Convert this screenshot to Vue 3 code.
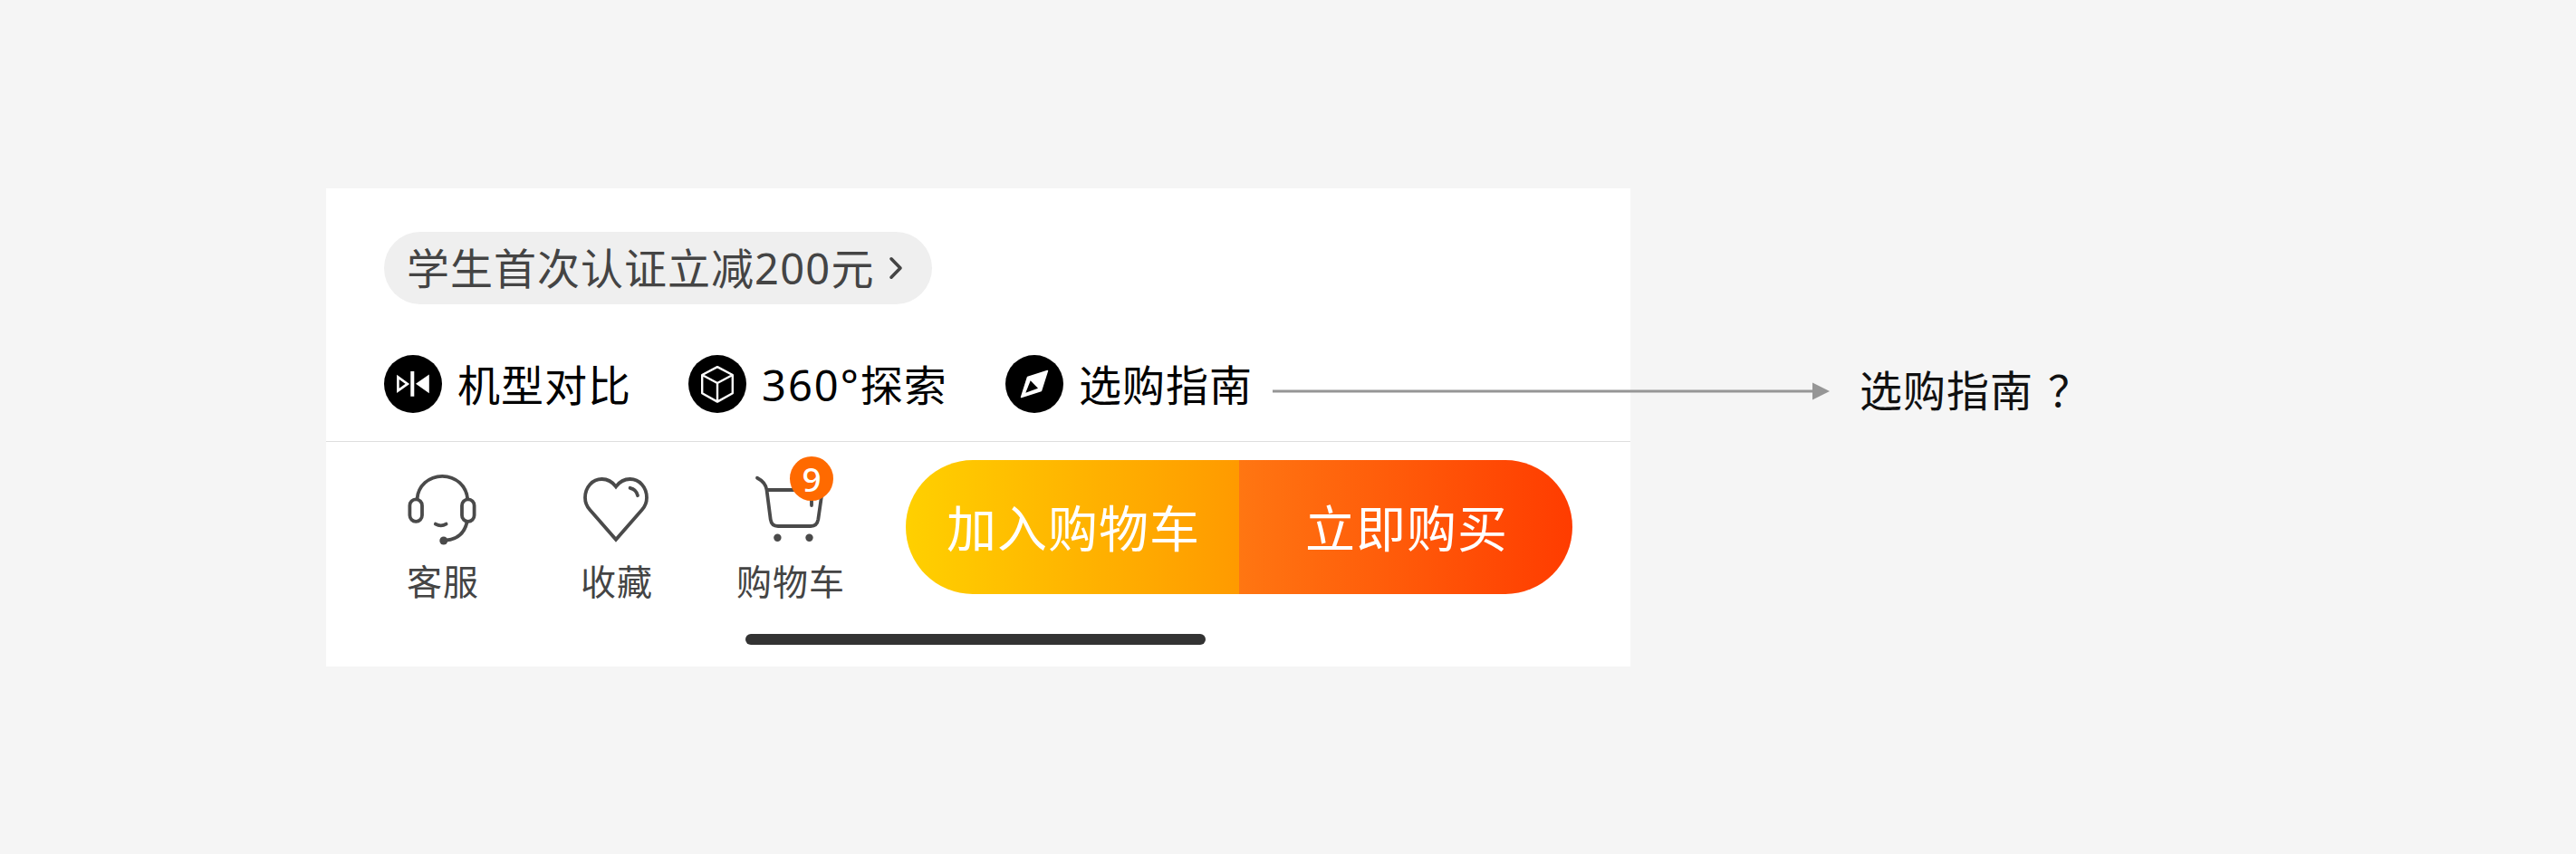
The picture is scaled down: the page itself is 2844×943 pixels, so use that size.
<template>
  <main class="page">
    <section class="card">
      <div class="card__top">
        <a class="coupon">
          <span>学生首次认证立减<span class="coupon__num">200</span>元</span>
          <svg class="coupon__arrow" viewBox="0 0 16 28" fill="none">
            <path d="M3 3.8L13 14L3 24.2" stroke="#444" stroke-width="3.6" stroke-linecap="round" stroke-linejoin="round" />
          </svg>
        </a>

        <nav class="tools">
          <a class="tool">
            <svg class="tool__icon" viewBox="0 0 64 64">
              <circle cx="32" cy="32" r="32" fill="#000" />
              <path d="M15.4 24.4V39.4L25.9 31.9Z" fill="none" stroke="#fff" stroke-width="2.6" />
              <path d="M29.3 18H33.3V45.7H29.3Z M35 31.8L49.8 21.4V42.2Z" fill="#fff" />
            </svg>
            <span class="tool__text">机型对比</span>
          </a>
          <a class="tool">
            <svg class="tool__icon" viewBox="0 0 64 64">
              <circle cx="32" cy="32" r="32" fill="#000" />
              <path
                d="M32 13.1L48.8 22V42.2L32 51.6L15.2 42.2V22Z M15.2 22L32 31L48.8 22M32 31V51.6"
                fill="none"
                stroke="#fff"
                stroke-width="2.4"
                stroke-linejoin="round"
              />
            </svg>
            <span class="tool__text"><span class="tool__num">360°</span>探索</span>
          </a>
          <a class="tool">
            <svg class="tool__icon" viewBox="0 0 64 64">
              <circle cx="32" cy="32" r="32" fill="#000" />
              <path
                d="M46.4 17.6L39.4 39.4L17.6 46.4L24.6 24.6Z"
                fill="#fff"
                stroke="#fff"
                stroke-width="1.6"
                stroke-linejoin="round"
              />
              <path d="M27.7 28.3L36 36.7L22.3 41.7Z" fill="#000" />
            </svg>
            <span class="tool__text">选购指南</span>
          </a>
        </nav>
      </div>

      <div class="bar">
        <div class="entries">
          <a class="entry">
            <svg class="entry__icon" viewBox="10 12 96 96">
              <path d="M30.5 51C31.5 36.5 43.5 25.8 58.3 25.8S85 36.5 86.2 51" />
              <rect x="22.4" y="51.4" width="13.6" height="24.4" rx="6.8" />
              <rect x="80" y="51.4" width="13.6" height="24.4" rx="6.8" />
              <path d="M50.8 78.6Q56.7 82 62.6 78.6" />
              <path d="M85.6 76.5C83 88 75 95.5 62 96.6" />
              <circle class="solid" cx="59.8" cy="97" r="4.5" />
            </svg>
            <span class="entry__label">客服</span>
          </a>
          <a class="entry">
            <svg class="entry__icon" viewBox="202 12 96 96">
              <path
                d="M250 37.3C246 32 240 29 234.5 29C224 29 216 38 216 49.5C216 54.5 218 59.4 221.3 63L250 95.8L278.7 63C282 59.4 284 54.5 284 49.5C284 38 276 29 265.5 29C260 29 254 32 250 37.3Z"
              />
              <path d="M265.6 38.8Q272.5 40.3 274 47.2" />
            </svg>
            <span class="entry__label">收藏</span>
          </a>
          <a class="entry">
            <span class="entry__wrap">
              <svg class="entry__icon" viewBox="34 22 96 96">
                <path d="M46 37.7C51.5 40.5 55.6 45 56.5 51L60.7 83.5Q61.8 91 69 91H105Q112 91 113.3 83.5L118 51H56.5" />
                <path d="M106 52V68" />
                <circle class="solid" cx="68.4" cy="103.7" r="4.2" />
                <circle class="solid" cx="103.5" cy="103.7" r="4.2" />
              </svg>
              <i class="badge">9</i>
            </span>
            <span class="entry__label">购物车</span>
          </a>
        </div>
        <div class="actions">
          <button class="action action--cart">加入购物车</button>
          <button class="action action--buy">立即购买</button>
        </div>
      </div>

      <div class="home-indicator"></div>
    </section>

    <div class="note">
      <svg class="note__arrow" viewBox="0 0 615 20">
        <path d="M0 10H600" stroke="#969696" stroke-width="3" />
        <path d="M596 0.5L615 10L596 19.5Z" fill="#969696" />
      </svg>
      <span class="note__text">选购指南<span class="note__mark">？</span></span>
    </div>
  </main>
</template>

<script setup>
defineOptions({ name: 'BuyBarSpec' })
</script>

<style>
body {
  margin: 0;
  background: #f5f5f5;
}
</style>

<style scoped>
.page {
  position: relative;
  box-sizing: border-box;
  width: 2844px;
  height: 943px;
  padding: 208px 0 0 360px;
  overflow: hidden;
  background: #f5f5f5;
  color: #000;
  font-family: 'Noto Sans CJK SC', sans-serif;
  font-size: 47px;
  letter-spacing: 1px;
  line-height: 64px;
  white-space: nowrap;
}

.card {
  display: flex;
  flex-direction: column;
  width: 1440px;
  height: 528px;
  background: #fff;
}

.card__top {
  box-sizing: border-box;
  height: 280px;
  padding: 48px 64px 0;
  border-bottom: 1px solid #dedede;
}

.coupon {
  display: flex;
  align-items: center;
  box-sizing: border-box;
  width: 605px;
  height: 80px;
  padding-left: 25px;
  border-radius: 40px;
  background: #efefef;
  color: #444;
}

.coupon > span {
  margin-top: -2px;
}

.coupon__num,
.tool__num {
  font-family: 'Noto Sans', sans-serif;
  letter-spacing: 1.3px;
}

.tool__num {
  letter-spacing: 2px;
}

.coupon__arrow {
  width: 16px;
  height: 28px;
  margin-left: 15px;
}

.tools {
  display: flex;
  gap: 64px;
  margin-top: 56px;
}

.tool {
  display: flex;
  gap: 16px;
}

.tool:nth-child(2) {
  width: 286px;
}

.tool__icon {
  flex: none;
  width: 64px;
  height: 64px;
}

.tool__text {
  margin: 0 -1px 0 1px;
  line-height: 62px;
}

.bar {
  display: flex;
  padding: 20px 64px 0 32px;
}

.entries {
  display: flex;
  width: 608px;
}

.entry {
  display: flex;
  flex-direction: column;
  align-items: center;
  width: 192px;
  margin-top: 4px;
  color: #444;
}

.entry__wrap {
  position: relative;
  height: 96px;
}

.entry__icon {
  display: block;
  width: 96px;
  height: 96px;
  fill: none;
  stroke: #4a4a4a;
  stroke-width: 3.8;
  stroke-linecap: round;
}

.entry__label {
  margin-top: 8px;
  padding-left: 2px;
  font-size: 39px;
  line-height: 48px;
}

.solid {
  fill: #4a4a4a;
  stroke: none;
}

.badge {
  position: absolute;
  top: -8px;
  left: 48px;
  width: 48px;
  height: 49px;
  border-radius: 50%;
  background: #ff6a00;
  color: #fff;
  font-family: 'Noto Sans', sans-serif;
  font-size: 37px;
  font-style: normal;
  font-weight: 500;
  letter-spacing: 0;
  line-height: 49px;
  text-align: center;
}

.actions {
  display: flex;
  width: 736px;
  height: 148px;
  border-radius: 74px;
  overflow: hidden;
}

.action {
  flex: 1;
  padding: 0 0 5px 2px;
  border: 0;
  color: #fff;
  font: inherit;
  font-size: 55px;
  letter-spacing: 1px;
}

.action--cart {
  background: linear-gradient(90deg, #ffd000, #ff9a00);
}

.action--buy {
  background: linear-gradient(90deg, #ff7612, #ff3c00);
}

.home-indicator {
  width: 508px;
  height: 12px;
  margin: 36px 0 0 463px;
  border-radius: 6px;
  background: #333;
}

/* callout runs from the guide entry out past the card edge */
.note {
  position: absolute;
  top: 398px;
  left: 1405px;
  display: flex;
  align-items: center;
  height: 68px;
}

.note__arrow {
  width: 615px;
  height: 20px;
}

.note__text {
  margin: -6px 0 0 33px;
  color: #111;
}

.note__mark {
  margin-left: 16px;
}
</style>
